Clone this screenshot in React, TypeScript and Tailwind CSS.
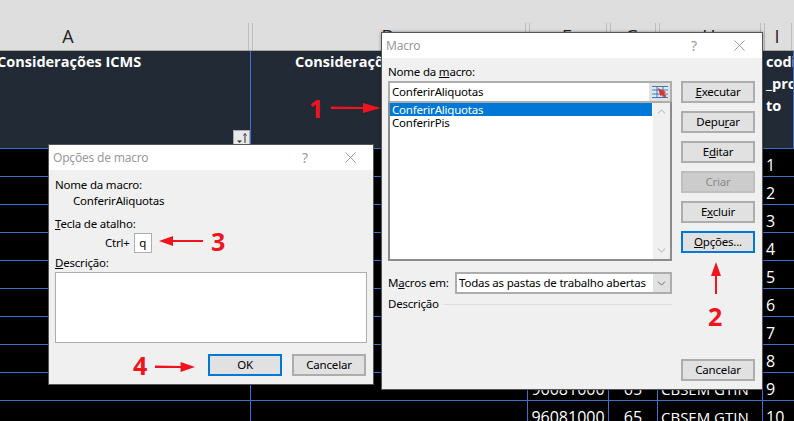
import { ChevronDown, ChevronUp, X } from "lucide-react";
import type { ReactNode } from "react";

const columns = [
  { letter: "A", title: "Considerações ICMS", align: "pl-0" },
  { letter: "D", title: "Considerações PIS", align: "pl-[44px]" },
  { letter: "E", title: "", align: "" },
  { letter: "G", title: "", align: "" },
  { letter: "H", title: "", align: "" },
  { letter: "I", title: "codi\n_pro\nto", align: "pl-[3px]" },
];
const gridCols = "grid grid-cols-[251px_277px_81px_49px_105px_31px]";
const rows = [1, 2, 3, 4, 5, 6, 7, 8, 9, 10];
const font = "font-['Noto_Sans','Open_Sans',sans-serif]";

function Sheet() {
  return (
    <div className="w-[794px] h-[421px] overflow-hidden bg-black font-['Open_Sans',sans-serif]">
      <div className={`${gridCols} h-[51px] bg-[#dedede] border-b border-[#a6a6a6]`}>
        {columns.map((c) => (
          <div key={c.letter} className="flex items-end min-w-0">
            <span className={`flex-1 min-w-0 text-center text-[18px] leading-[28px] text-[#222] ${c.letter === "A" ? "-ml-[112px]" : ""}`}>{c.letter}</span>
            <div className="w-[5px] h-[27px] -mr-[2px] shrink-0 border-x border-[#bdbdbd]" />
          </div>
        ))}
      </div>
      <div className={`${gridCols} h-[97px] bg-[#222a35]`}>
        {columns.map((c) => (
          <div
            key={c.letter}
            className={`border-r border-[#3f6fd0] text-[14.5px] leading-[22px] font-bold text-white whitespace-pre overflow-hidden ${c.align}`}
          >
            <span className={c.letter === "A" ? "block -ml-[3px]" : "block"}>{c.title}</span>
          </div>
        ))}
      </div>
      {rows.map((n) => (
        <div key={n} className={`${gridCols} auto-rows-[27px] h-[28px] border-t border-[#3f6fd0] text-white text-[16px] leading-[33px]`}>
          <div className="border-r border-[#3f6fd0]" />
          <div className="border-r border-[#3f6fd0]" />
          <div className="border-r border-[#3f6fd0] text-center overflow-hidden">96081000</div>
          <div className="border-r border-[#3f6fd0] text-center overflow-hidden">65</div>
          <div className="border-r border-[#3f6fd0] pl-[3px] text-[15px] whitespace-nowrap overflow-hidden">CBSEM GTIN</div>
          <div className="pl-[3px] whitespace-nowrap overflow-hidden">{n}</div>
        </div>
      ))}
    </div>
  );
}

function Btn({ children, focus, disabled, className = "" }: { children: ReactNode; focus?: boolean; disabled?: boolean; className?: string }) {
  return (
    <div
      className={`w-[74px] h-[22px] shrink-0 flex items-center justify-center leading-none ${
        focus ? "border-2 border-[#0078d7] bg-[#e1e1e1]" : disabled ? "border-2 border-[#bfbfbf] bg-[#cccccc] text-[#8a8a8a]" : "border-2 border-[#adadad] bg-[#e1e1e1]"
      } ${className}`}
    >
      <span>{children}</span>
    </div>
  );
}

function TitleBar({ title }: { title: string }) {
  return (
    <div className="h-[25px] bg-white flex items-center pl-[4px] pr-[13px] text-[#9a9a9a]">
      <span className="flex-1 text-[12px]">{title}</span>
      <span className="text-[14px] mr-[33px]">?</span>
      <X className="w-[19px] h-[19px] text-[#777]" strokeWidth={0.9} />
    </div>
  );
}

function Arrow({ className }: { className: string }) {
  return (
    <svg viewBox="0 0 50 12" preserveAspectRatio="none" className={`absolute ${className}`}>
      <path d="M0 4.5 L32 5 L32 1 L50 6 L32 11 L32 7 L0 7 Z" fill="#f0141e" />
    </svg>
  );
}

function MacroIcon() {
  return (
    <svg viewBox="0 0 16 12" className="w-[16px] h-[12px]">
      <rect x="0" y="0" width="16" height="12" fill="#dfe9f5" />
      <path d="M0 .5H16M0 4H16M0 8H16M0 11.5H16M5 0V12M11 0V12" stroke="#3d78b8" strokeWidth="1" />
      <path d="M6 2 L14 6 L12 7.5 L14.5 10 L12.5 11.5 L10 9 L8.5 10.5 Z" fill="#d8362a" />
    </svg>
  );
}

function MacroDialog() {
  return (
    <div className="absolute left-[381px] top-[32px] w-[382px] h-[358px] border border-[#555] bg-[#f0f0f0] text-black text-[11.5px] tracking-[-0.2px] shadow-[0_0_3px_rgba(0,0,0,0.4)]">
      <TitleBar title="Macro" />
      <div className="flex pl-[6px] pt-[4px]">
        <div className="w-[284px]">
          <div className="leading-[20px] h-[19px]">
            Nome da <span className="underline">m</span>acro:
          </div>
          <div className="h-[20px] flex border-2 border-b-0 border-[#adadad] bg-white">
            <span className="flex-1 pl-[2px] leading-[18px]">ConferirAliquotas</span>
            <div className="w-[21px] bg-[#e1e1e1] flex items-center justify-center">
              <MacroIcon />
            </div>
          </div>
          <div className="h-[160px] flex border-2 border-[#8b8b8b] border-t-[#adadad] bg-white">
            <div className="flex-1 leading-[13px]">
              <div className="h-[13px] bg-[#0078d7] text-white pl-[2px]">ConferirAliquotas</div>
              <div className="h-[13px] pl-[2px]">ConferirPis</div>
            </div>
            <div className="w-[17px] ml-[1px] bg-[#f0f0f0] flex flex-col justify-between items-center text-[#c4c4c4] py-[2px]">
              <ChevronUp className="w-[13px] h-[13px]" strokeWidth={2} />
              <ChevronDown className="w-[13px] h-[13px]" strokeWidth={2} />
            </div>
          </div>
          <div className="flex items-center mt-[11px] h-[22px]">
            <span className="w-[67px] shrink-0 whitespace-nowrap">
              M<span className="underline">a</span>cros em:
            </span>
            <div className="flex-1 min-w-0 h-[22px] flex border-2 border-[#adadad] bg-white">
              <span className="flex-1 min-w-0 pl-[2px] leading-[18px] whitespace-nowrap">Todas as pastas de trabalho abertas</span>
              <div className="w-[17px] shrink-0 bg-[#e1e1e1] flex items-center justify-center">
                <ChevronDown className="w-[13px] h-[13px] text-[#555]" strokeWidth={1.5} />
              </div>
            </div>
          </div>
          <div className="flex items-center h-[20px]">
            <span>Descrição</span>
            <div className="flex-1 h-[1px] bg-[#dcdcdc] ml-[5px]" />
          </div>
        </div>
        <div className="ml-[9px] mt-[19px] flex flex-col gap-[8px] h-[300px]">
          <Btn><span className="underline">E</span>xecutar</Btn>
          <Btn>Depu<span className="underline">r</span>ar</Btn>
          <Btn>E<span className="underline">d</span>itar</Btn>
          <Btn disabled>Criar</Btn>
          <Btn>E<span className="underline">x</span>cluir</Btn>
          <Btn focus><span className="underline">O</span>pções...</Btn>
          <Btn className="mt-auto">Cancelar</Btn>
        </div>
      </div>
    </div>
  );
}

function OptionsDialog() {
  return (
    <div className="absolute left-[48px] top-[144px] w-[326px] h-[241px] border border-[#555] bg-[#f0f0f0] text-black text-[11.5px] tracking-[-0.2px]">
      <TitleBar title="Opções de macro" />
      <div className="pl-[6px] pr-[6px] pt-[6px]">
        <div className="leading-[17px]">Nome da macro:</div>
        <div className="leading-[16px] pl-[18px]">ConferirAliquotas</div>
        <div className="leading-[18px] mt-[6px]">
          <span className="underline">T</span>ecla de atalho:
        </div>
        <div className="flex items-center h-[20px] pl-[50px] gap-[4px]">
          <span>Ctrl+</span>
          <div className="w-[18px] h-[20px] border border-[#adadad] bg-white flex items-center justify-center">q</div>
        </div>
        <div className="leading-[19px]">
          <span className="underline">D</span>escrição:
        </div>
        <div className="h-[71px] border border-[#adadad] bg-white" />
        <div className="flex justify-end gap-[10px] mt-[11px] pr-[1px]">
          <Btn focus>OK</Btn>
          <Btn>Cancelar</Btn>
        </div>
      </div>
    </div>
  );
}

function FilterButton() {
  return (
    <div className="absolute left-[233px] top-[130px] w-[17px] h-[15px] bg-[#e8e8e8] border border-[#aaa]">
      <svg viewBox="0 0 15 13" className="w-[15px] h-[13px]">
        <path d="M3 9.5H8L5.5 12Z" fill="#333" />
        <path d="M11 12V3M9.5 4.5L11 2.5L12.5 4.5" stroke="#333" strokeWidth="1" fill="none" />
      </svg>
    </div>
  );
}

export default function App() {
  return (
    <div className={`relative w-[794px] h-[421px] overflow-hidden ${font}`}>
      <Sheet />
      <FilterButton />
      <OptionsDialog />
      <MacroDialog />

      <span className="absolute left-[309px] top-[91px] text-[25px] leading-[34px] font-bold text-[#f0141e] font-['Open_Sans',sans-serif]">1</span>
      <Arrow className="left-[331px] top-[102px] w-[50px] h-[12px]" />
      <span className="absolute left-[211px] top-[224px] text-[25px] leading-[34px] font-bold text-[#f0141e] font-['Open_Sans',sans-serif]">3</span>
      <svg viewBox="0 0 44 10" className="absolute left-[159px] top-[236px] w-[44px] h-[10px]">
        <path d="M44 4 L14 4 L14 0 L0 5 L14 10 L14 6 L44 6 Z" fill="#f0141e" />
      </svg>
      <span className="absolute left-[133px] top-[348px] text-[25px] leading-[34px] font-bold text-[#f0141e] font-['Open_Sans',sans-serif]">4</span>
      <Arrow className="left-[155px] top-[361px] w-[40px] h-[12px]" />
      <span className="absolute left-[708px] top-[299px] text-[25px] leading-[34px] font-bold text-[#f0141e] font-['Open_Sans',sans-serif]">2</span>
      <svg viewBox="0 0 10 32" className="absolute left-[711px] top-[262px] w-[10px] h-[32px]">
        <path d="M4 32 L4 14 L0 14 L5 0 L10 14 L6 14 L6 32 Z" fill="#f0141e" />
      </svg>
    </div>
  );
}
